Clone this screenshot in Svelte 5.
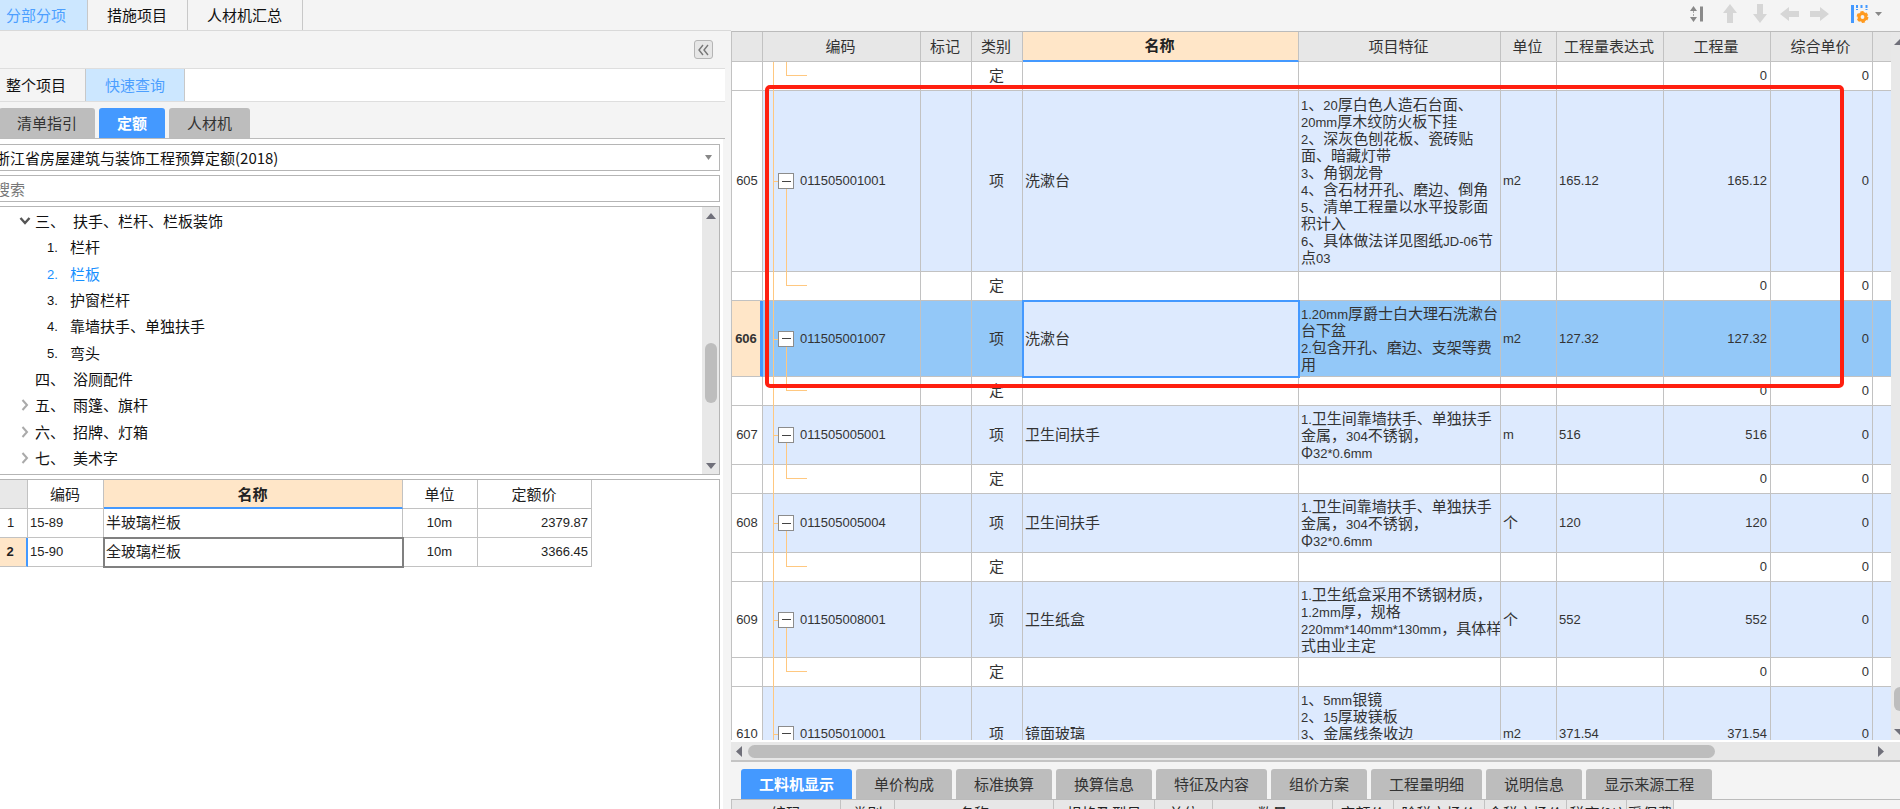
<script lang="ts">
  type Item = {
    no: number;
    code: string;
    name: string;
    feature: string[];
    unit: string;
    qty: string;
  };

  const mainTabs = ['分部分项', '措施项目', '人材机汇总'];
  const queryTabs = ['整个项目', '快速查询'];
  const libTabs = ['清单指引', '定额', '人材机'];
  const detailTabs = [
    '工料机显示', '单价构成', '标准换算', '换算信息', '特征及内容',
    '组价方案', '工程量明细', '说明信息', '显示来源工程'
  ];

  let mainTab = $state('分部分项');
  let queryTab = $state('快速查询');
  let libTab = $state('定额');
  let detailTab = $state('工料机显示');
  let selected = $state(606);

  const tree = [
    { num: '三、', label: '扶手、栏杆、栏板装饰', arrow: 'open' },
    { num: '1.', label: '栏杆', child: true },
    { num: '2.', label: '栏板', child: true, active: true },
    { num: '3.', label: '护窗栏杆', child: true },
    { num: '4.', label: '靠墙扶手、单独扶手', child: true },
    { num: '5.', label: '弯头', child: true },
    { num: '四、', label: '浴厕配件' },
    { num: '五、', label: '雨篷、旗杆', arrow: 'closed' },
    { num: '六、', label: '招牌、灯箱', arrow: 'closed' },
    { num: '七、', label: '美术字', arrow: 'closed' }
  ];

  const quotas = [
    { code: '15-89', name: '半玻璃栏板', unit: '10m', price: '2379.87' },
    { code: '15-90', name: '全玻璃栏板', unit: '10m', price: '3366.45' }
  ];

  const items: Item[] = [
    {
      no: 605, code: '011505001001', name: '洗漱台', unit: 'm2', qty: '165.12',
      feature: [
        '1、20厚白色人造石台面、', '20mm厚木纹防火板下挂', '2、深灰色刨花板、瓷砖贴',
        '面、暗藏灯带', '3、角钢龙骨', '4、含石材开孔、磨边、倒角',
        '5、清单工程量以水平投影面', '积计入', '6、具体做法详见图纸JD-06节', '点03'
      ]
    },
    {
      no: 606, code: '011505001007', name: '洗漱台', unit: 'm2', qty: '127.32',
      feature: ['1.20mm厚爵士白大理石洗漱台', '台下盆', '2.包含开孔、磨边、支架等费', '用']
    },
    {
      no: 607, code: '011505005001', name: '卫生间扶手', unit: 'm', qty: '516',
      feature: ['1.卫生间靠墙扶手、单独扶手', '金属，304不锈钢，', 'Φ32*0.6mm']
    },
    {
      no: 608, code: '011505005004', name: '卫生间扶手', unit: '个', qty: '120',
      feature: ['1.卫生间靠墙扶手、单独扶手', '金属，304不锈钢，', 'Φ32*0.6mm']
    },
    {
      no: 609, code: '011505008001', name: '卫生纸盒', unit: '个', qty: '552',
      feature: ['1.卫生纸盒采用不锈钢材质，', '1.2mm厚，规格', '220mm*140mm*130mm，具体样', '式由业主定']
    },
    {
      no: 610, code: '011505010001', name: '镜面玻璃', unit: 'm2', qty: '371.54',
      feature: ['1、5mm银镜', '2、15厚玻镁板', '3、金属线条收边', '', '']
    }
  ];

  const resources = [
    { label: '编码', w: 109 }, { label: '类别', w: 54 }, { label: '名称', w: 159 },
    { label: '规格及型号', w: 101 }, { label: '单位', w: 58 }, { label: '数量', w: 120 },
    { label: '定额价', w: 61 }, { label: '除税市场价', w: 91 }, { label: '含税市场价', w: 82 },
    { label: '税率(%)', w: 60 }, { label: '采保费', w: 47 }
  ];

  // split into latin and han runs, the two are set at different sizes
  const runs = (text: string) => text.match(/[\x20-\x7e]+|[^\x20-\x7e]+/g) ?? [];
  const isLatin = (run: string) => run.charCodeAt(0) < 127;
  const rowHeight = (item: Item) => Math.round(item.feature.length * 17.5 + 6);
</script>

{#snippet mixed(text: string)}{#each runs(text) as run}{#if isLatin(run)}<span class="num">{run}</span>{:else}{run}{/if}{/each}{/snippet}

{#snippet quotaRow()}
  <tr class="sub">
    <th class="no"></th>
    <td class="code"><i class="trunk"></i><i class="elbow"></i></td>
    <td></td>
    <td class="mid">定</td>
    <td></td>
    <td></td>
    <td></td>
    <td></td>
    <td class="num right">0</td>
    <td class="num right">0</td>
    <td></td>
  </tr>
{/snippet}

<div class="app">
  <aside class="side">
    <nav class="main-tabs">
      {#each mainTabs as tab}
        <button class:active={mainTab === tab} onclick={() => (mainTab = tab)}>{tab}</button>
      {/each}
    </nav>

    <div class="side-head">
      <button class="collapse" aria-label="收起">
        <svg width="13" height="12" viewBox="0 0 13 12">
          <path d="M6 1 L2 6 L6 11 M11 1 L7 6 L11 11" fill="none" stroke="#777" stroke-width="1.4" />
        </svg>
      </button>
    </div>

    <nav class="query-tabs">
      {#each queryTabs as tab}
        <button class:active={queryTab === tab} onclick={() => (queryTab = tab)}>{tab}</button>
      {/each}
    </nav>

    <nav class="chips lib-tabs">
      {#each libTabs as tab}
        <button class:active={libTab === tab} onclick={() => (libTab = tab)}>{tab}</button>
      {/each}
    </nav>

    <div class="query">
      <div class="field">
        <select aria-label="定额库">
          <option>浙江省房屋建筑与装饰工程预算定额(2018)</option>
        </select>
        <svg width="7" height="5" viewBox="0 0 7 5"><path d="M0 0 H7 L3.5 5 Z" fill="#888" /></svg>
      </div>
      <div class="field">
        <input type="text" placeholder="搜索" aria-label="搜索" />
      </div>

      <div class="tree-box">
        <ul class="tree">
          {#each tree as node}
            <li class:child={node.child} class:active={node.active}>
              <span class="arrow">
                {#if node.arrow === 'open'}
                  <svg width="12" height="8" viewBox="0 0 12 8"><path d="M1.5 1 L6 6 L10.5 1" fill="none" stroke="#555" stroke-width="2.4" /></svg>
                {:else if node.arrow === 'closed'}
                  <svg width="8" height="12" viewBox="0 0 8 12"><path d="M1.5 1 L6 6 L1.5 11" fill="none" stroke="#aaa" stroke-width="2" /></svg>
                {/if}
              </span>
              <span class="idx">{@render mixed(node.num)}</span>
              <span>{node.label}</span>
            </li>
          {/each}
        </ul>
        <div class="vbar">
          <svg width="10" height="6" viewBox="0 0 12 7"><path d="M6 0 L12 7 H0 Z" fill="#70707a" /></svg>
          <i class="vthumb"></i>
          <svg width="10" height="6" viewBox="0 0 12 7"><path d="M0 0 H12 L6 7 Z" fill="#70707a" /></svg>
        </div>
      </div>

      <div class="quota-box">
        <table class="quota">
          <thead>
            <tr>
              <th class="no"></th>
              <th class="q-code">编码</th>
              <th class="q-name current">名称</th>
              <th class="q-unit">单位</th>
              <th class="q-price">定额价</th>
            </tr>
          </thead>
          <tbody>
            {#each quotas as quota, i}
              <tr class:picked={i === 1}>
                <th class="no num">{i + 1}</th>
                <td class="num">{quota.code}</td>
                <td class="cell-name">{quota.name}</td>
                <td class="num mid">{quota.unit}</td>
                <td class="num right">{quota.price}</td>
              </tr>
            {/each}
          </tbody>
        </table>
      </div>
    </div>
  </aside>

  <main class="work">
    <div class="toolbar">
      <button class="sort" aria-label="排序">
        <svg width="14" height="16" viewBox="0 0 14 16">
          <path d="M3.5 0 L7 5 H0 Z M0 11 H7 L3.5 16 Z" fill="#888" />
          <path d="M3.5 5 V11" stroke="#aaa" stroke-width="1" stroke-dasharray="2 1" />
          <path d="M10 0.5 h3 v15 h-3 z" fill="#8a8a8a" />
        </svg>
      </button>
      <button aria-label="上移">
        <svg width="14" height="19" viewBox="0 0 14 19"><path d="M7 0 L14 9 H10 V19 H4 V9 H0 Z" fill="#d6d6d6" /></svg>
      </button>
      <button aria-label="下移">
        <svg width="14" height="19" viewBox="0 0 14 19"><path d="M7 19 L14 10 H10 V0 H4 V10 H0 Z" fill="#d6d6d6" /></svg>
      </button>
      <button aria-label="左移">
        <svg width="19" height="14" viewBox="0 0 19 14"><path d="M0 7 L9 0 V4 H19 V10 H9 V14 Z" fill="#d6d6d6" /></svg>
      </button>
      <button aria-label="右移">
        <svg width="19" height="14" viewBox="0 0 19 14"><path d="M19 7 L10 0 V4 H0 V10 H10 V14 Z" fill="#d6d6d6" /></svg>
      </button>
      <button class="columns" aria-label="列设置">
        <svg width="18" height="20" viewBox="0 0 18 20">
          <path d="M0 1 h3 v18 h-3 z" fill="#4499ff" />
          <path d="M6 1 V6 M10.5 1 V5 M15.5 1 V6" stroke="#4499ff" stroke-width="2" stroke-dasharray="3 1" />
          <circle cx="11.5" cy="13" r="3.4" fill="none" stroke="#ff9a1f" stroke-width="3" />
          <circle cx="11.5" cy="13" r="4.9" fill="none" stroke="#ff9a1f" stroke-width="2" stroke-dasharray="3.1 2.03" />
        </svg>
        <svg width="7" height="4" viewBox="0 0 7 4"><path d="M0 0 H7 L3.5 4 Z" fill="#888" /></svg>
      </button>
    </div>

    <div class="bill">
      <div class="bill-body">
        <table class="grid">
          <thead>
            <tr>
              <th class="w-no"></th>
              <th class="w-code">编码</th>
              <th class="w-mark">标记</th>
              <th class="w-mark">类别</th>
              <th class="w-name current">名称</th>
              <th class="w-feature">项目特征</th>
              <th class="w-unit">单位</th>
              <th class="w-qty">工程量表达式</th>
              <th class="w-qty">工程量</th>
              <th class="w-price">综合单价</th>
              <th></th>
            </tr>
          </thead>
          <tbody>
            {@render quotaRow()}
            {#each items as item, i}
              <tr
                class="item"
                class:picked={selected === item.no}
                style="height: {rowHeight(item)}px"
                onclick={() => (selected = item.no)}
              >
                <th class="no num">{item.no}</th>
                <td class="code num">
                  <i class="trunk"></i><i class="drop"></i>
                  <button class="fold" aria-label="折叠"></button>
                  {item.code}
                </td>
                <td></td>
                <td class="mid">项</td>
                <td class="cell-name">{item.name}</td>
                <td class="feature">
                  {#each item.feature as line}
                    <div>{@render mixed(line)}</div>
                  {/each}
                </td>
                <td class="unit">{@render mixed(item.unit)}</td>
                <td class="num">{item.qty}</td>
                <td class="num right">{item.qty}</td>
                <td class="num right">0</td>
                <td></td>
              </tr>
              {#if i < items.length - 1}
                {@render quotaRow()}
              {/if}
            {/each}
          </tbody>
        </table>
      </div>
      <div class="bill-vbar">
        <svg width="14" height="7" viewBox="0 0 14 7"><path d="M7 0 L14 7 H0 Z" fill="#70707a" /></svg>
        <i></i>
        <svg width="14" height="7" viewBox="0 0 14 7"><path d="M0 0 H14 L7 7 Z" fill="#70707a" /></svg>
      </div>
      <div class="mark-box"></div>
    </div>

    <div class="hbar">
      <svg width="6" height="11" viewBox="0 0 6 11"><path d="M6 0 V11 L0 5.5 Z" fill="#70707a" /></svg>
      <div class="htrack"><i></i></div>
      <svg width="6" height="11" viewBox="0 0 6 11"><path d="M0 0 V11 L6 5.5 Z" fill="#70707a" /></svg>
    </div>

    <nav class="chips detail-tabs">
      {#each detailTabs as tab}
        <button class:active={detailTab === tab} onclick={() => (detailTab = tab)}>{tab}</button>
      {/each}
    </nav>

    <div class="resources">
      {#each resources as col}
        <span style="width: {col.w}px">{col.label}</span>
      {/each}
    </div>
  </main>
</div>

<style>
  :global(body) {
    margin: 0;
    overflow: hidden;
  }

  .app {
    display: grid;
    grid-template-columns: 731px minmax(0, 1fr);
    height: 100vh;
    overflow: hidden;
    background: #f4f4f4;
    color: #222;
    font-family: 'Noto Sans CJK SC', sans-serif;
    font-size: 15px;
    line-height: 20px;
  }

  .app * {
    box-sizing: border-box;
  }

  button,
  select,
  input {
    margin: 0;
    padding: 0;
    border: 0;
    background: none;
    color: inherit;
    font: inherit;
  }

  svg {
    display: block;
    flex: none;
  }

  .num {
    font-family: 'Liberation Sans', sans-serif;
    font-size: 13px;
  }

  .mid {
    text-align: center;
  }

  .right {
    text-align: right;
  }

  /* left pane */

  .side {
    display: flex;
    flex-direction: column;
    min-height: 0;
    overflow: hidden;
  }

  .main-tabs {
    display: flex;
    height: 31px;
    border-bottom: 1px solid #d9d9d9;
  }

  .main-tabs button {
    padding: 0 20px 0 19px;
    border-right: 1px solid #c8c8c8;
    color: #111;
  }

  .main-tabs button:first-child {
    padding: 0 21px 0 6px;
  }

  .main-tabs .active,
  .query-tabs .active {
    background: #cce7ff;
    color: #4c9fff;
  }

  .side-head {
    display: flex;
    align-items: center;
    justify-content: flex-end;
    height: 37px;
    padding-right: 18px;
  }

  .collapse {
    display: grid;
    place-items: center;
    width: 19px;
    height: 19px;
    border: 1px solid #b5b5b5;
    border-radius: 3px;
    background: #e6e6e6;
  }

  .query-tabs {
    display: flex;
    height: 34px;
    margin-right: 6px;
    border-top: 1px solid #dedede;
    border-bottom: 1px solid #dedede;
    background: #fff;
  }

  .query-tabs button {
    padding: 0 19px;
    border-right: 1px solid #c8c8c8;
    background: #f4f4f4;
    color: #111;
  }

  .query-tabs button:first-child {
    padding-left: 6px;
  }

  .query-tabs .active {
    background: #cce7ff;
    color: #4c9fff;
  }

  .chips {
    display: flex;
    align-items: flex-end;
    gap: 4px;
    border-bottom: 1px solid #bbb;
  }

  .chips button {
    height: 30px;
    padding: 0 18px;
    border-radius: 3px 3px 0 0;
    background: #bdbdbd;
    color: #333;
    white-space: nowrap;
  }

  .chips .active {
    background: #4499ff;
    color: #fff;
    font-weight: 700;
  }

  .lib-tabs {
    height: 37px;
    margin: 0 6px 0 -1px;
  }

  .query {
    display: flex;
    flex: 1;
    flex-direction: column;
    gap: 4px;
    min-height: 0;
    margin: 0 8px 0 -6px;
    padding: 5px 3px 0 0;
    background: #fff;
  }

  .field {
    display: flex;
    align-items: center;
    height: 27px;
    padding-right: 7px;
    border: 1px solid #b5b5b5;
    color: #111;
  }

  .field select,
  .field input {
    flex: 1;
    min-width: 0;
    height: 25px;
    outline: none;
    appearance: none;
  }

  .field input::placeholder {
    color: #777;
    opacity: 1;
  }

  .tree-box {
    display: flex;
    height: 269px;
    border: 1px solid #b5b5b5;
  }

  .tree {
    display: flex;
    flex: 1;
    flex-direction: column;
    justify-content: space-between;
    margin: 0;
    padding: 1px 0 3px 23px;
    color: #111;
    list-style: none;
  }

  .tree li {
    display: flex;
    align-items: center;
    height: 26px;
  }

  .arrow {
    display: grid;
    place-items: center;
    width: 13px;
    margin-right: 4px;
  }

  .idx {
    width: 38px;
  }

  .child .arrow {
    margin-right: 16px;
  }

  .child .idx {
    width: 23px;
  }

  .tree .active {
    color: #1890ff;
  }

  .vbar {
    display: flex;
    flex-direction: column;
    align-items: center;
    width: 17px;
    padding: 6px 0 5px;
    background: #e8e8e8;
  }

  .vthumb {
    width: 12px;
    height: 60px;
    margin: 124px 0 auto;
    border-radius: 6px;
    background: #bdbdbd;
  }

  .quota-box {
    flex: 1;
    min-height: 0;
    border: 1px solid #b5b5b5;
    border-width: 1px 1px 0 0;
  }

  table {
    border-collapse: separate;
    border-spacing: 0;
    table-layout: fixed;
  }

  th,
  td {
    padding: 0 3px 0 2px;
    border: 0 solid #c2c2c2;
    border-width: 0 1px 1px 0;
    overflow: hidden;
    white-space: nowrap;
  }

  th {
    font-weight: 400;
  }

  .quota {
    width: 598px;
    color: #222;
  }

  .quota tr {
    height: 29px;
  }

  .quota .no {
    width: 34px;
    padding: 0;
  }

  .quota thead .no {
    background: #e8e8e8;
  }

  .q-code {
    width: 76px;
  }

  .q-unit {
    width: 75px;
  }

  .q-price {
    width: 114px;
  }

  th.current {
    border-bottom: 2px solid #4499ff;
    background: #ffe6c8;
    font-weight: 700;
  }

  .picked .no {
    border-right: 2px solid #4499ff;
    background: #ffe6c8;
    font-weight: 700;
  }

  td.mid,
  .cell-name {
    padding-bottom: 2px;
  }

  td.mid.num {
    padding-bottom: 0;
  }

  .quota .picked .cell-name {
    outline: 2px solid #808080;
    outline-offset: -1px;
  }

  /* right pane */

  .work {
    display: flex;
    flex-direction: column;
    min-width: 0;
    min-height: 0;
  }

  .toolbar {
    display: flex;
    align-items: center;
    justify-content: flex-end;
    gap: 11px;
    height: 31px;
    padding: 0 18px 4px 0;
  }

  .toolbar button {
    display: grid;
    place-items: center;
    width: 19px;
  }

  .toolbar .sort {
    justify-items: start;
  }

  .toolbar .columns {
    display: flex;
    align-items: center;
    gap: 6px;
    width: auto;
    margin-left: 11px;
  }

  .bill {
    position: relative;
    display: flex;
    flex: 1;
    min-height: 0;
    border-top: 1px solid #bbb;
    border-left: 1px solid #c2c2c2;
  }

  .bill-body {
    flex: 1;
    min-width: 0;
    overflow: hidden;
    background: #fff;
  }

  .grid {
    width: 100%;
    color: #333;
  }

  .grid thead tr {
    height: 30px;
  }

  .grid thead th {
    padding: 0 2px 2px 0;
    background: #e7e7e7;
  }

  .grid thead .current {
    background: #ffe6c8;
    color: #222;
  }

  .w-no {
    width: 31px;
  }

  .w-code {
    width: 158px;
  }

  .w-mark {
    width: 51px;
  }

  .w-name {
    width: 276px;
  }

  .w-feature {
    width: 202px;
  }

  .w-unit {
    width: 56px;
  }

  .w-qty {
    width: 107px;
  }

  .w-price {
    width: 102px;
  }

  .grid th:last-child,
  .grid td:last-child {
    border-right: 0;
  }

  .sub {
    height: 29px;
  }

  .grid .no {
    padding: 0;
  }

  .item td {
    background: #ddeafe;
  }

  .grid .picked td {
    background: #93c8f8;
  }

  .grid .picked .no {
    border-right-width: 3px;
  }

  .grid .picked .cell-name {
    background: #ddeafe;
    outline: 2px solid #4499ff;
    outline-offset: -1px;
  }

  .feature {
    padding: 0 0 2px 2px;
    line-height: 17px;
  }

  .feature div {
    height: 17px;
  }

  .unit {
    padding-bottom: 2px;
  }

  /* tree guides inside the code column */
  .code {
    position: relative;
    padding-left: 37px;
    overflow: visible;
  }

  .code i {
    position: absolute;
    border: 0 solid #ffc880;
  }

  .code .trunk {
    top: 0;
    bottom: -1px;
    left: 10px;
    border-left-width: 1px;
  }

  .code .drop {
    top: 50%;
    bottom: -1px;
    left: 23px;
    border-left-width: 1px;
  }

  .code .elbow {
    top: 0;
    left: 23px;
    width: 21px;
    height: 50%;
    border-width: 0 0 1px 1px;
  }

  .fold {
    position: absolute;
    top: calc(50% - 8px);
    left: 15px;
    width: 16px;
    height: 16px;
    border: 1px solid #8c8c8c;
    background: linear-gradient(#444, #444) center / 9px 1px no-repeat #fff;
  }

  .fold::before {
    content: '';
    position: absolute;
    top: 7px;
    left: -6px;
    width: 5px;
    height: 1px;
    background: #ffc880;
  }

  .bill-vbar {
    display: flex;
    flex-direction: column;
    width: 9px;
    padding: 6px 0 4px 3px;
    overflow: hidden;
    background: #e8e8e8;
  }

  .bill-vbar i {
    width: 12px;
    height: 24px;
    margin: auto 0 18px;
    border-radius: 6px;
    background: #bdbdbd;
  }

  .mark-box {
    position: absolute;
    top: 53px;
    left: 33px;
    width: 1079px;
    height: 303px;
    border: 4px solid #ff1f10;
    border-radius: 5px;
    pointer-events: none;
  }

  .hbar {
    display: flex;
    align-items: center;
    gap: 6px;
    height: 22px;
    padding: 0 16px 0 5px;
    border-top: 2px solid #fff;
    border-bottom: 2px solid #c4c4c4;
    background: #e8e8e8;
  }

  .htrack {
    flex: 1;
  }

  .htrack i {
    display: block;
    width: 86%;
    height: 13px;
    border-radius: 7px;
    background: #bdbdbd;
  }

  .detail-tabs {
    height: 38px;
    padding-left: 10px;
  }

  .resources {
    display: flex;
    height: 9px;
    overflow: hidden;
    border-left: 1px solid #c2c2c2;
  }

  .resources span {
    flex: none;
    height: 30px;
    padding-top: 3px;
    border-right: 1px solid #c2c2c2;
    overflow: hidden;
    background: #e7e7e7;
    text-align: center;
    white-space: nowrap;
  }
</style>
